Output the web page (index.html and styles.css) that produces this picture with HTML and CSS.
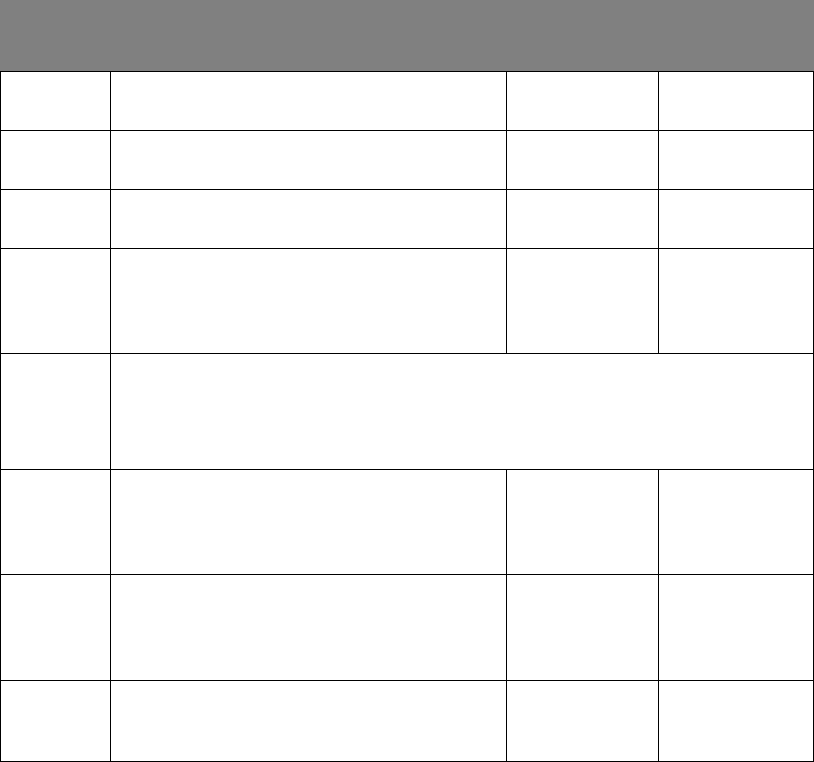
FILE: index.html
```html
<!DOCTYPE html>
<html>
<head>
<meta charset="utf-8">
<link rel="stylesheet" href="styles.css">
</head>
<body>
<div class="page">
  <div class="header"></div>
  <div class="grid">
    <div class="cell"></div><div class="cell"></div><div class="cell"></div><div class="cell"></div>
    <div class="cell"></div><div class="cell"></div><div class="cell"></div><div class="cell"></div>
    <div class="cell"></div><div class="cell"></div><div class="cell"></div><div class="cell"></div>
    <div class="cell"></div><div class="cell"></div><div class="cell"></div><div class="cell"></div>
    <div class="cell"></div><div class="cell span3"></div>
    <div class="cell"></div><div class="cell"></div><div class="cell"></div><div class="cell"></div>
    <div class="cell"></div><div class="cell"></div><div class="cell"></div><div class="cell"></div>
    <div class="cell"></div><div class="cell"></div><div class="cell"></div><div class="cell"></div>
  </div>
</div>
</body>
</html>
```
FILE: styles.css
```css
html, body {
  margin: 0;
  padding: 0;
  background: #ffffff;
  font-family: "Liberation Sans", Arial, sans-serif;
}
.page {
  width: 814px;
  height: 762px;
  display: flex;
  flex-direction: column;
}
.header {
  height: 71px;
  background: #808080;
}
.grid {
  display: grid;
  background: #000000;
  padding: 1px;
  gap: 1px;
  grid-template-columns: 109px 395px 151px 154px;
  grid-template-rows: 58px 58px 58px 104px 115px 104px 105px 80px;
}
.cell {
  background: #ffffff;
}
.span3 {
  grid-column: span 3;
}
```
